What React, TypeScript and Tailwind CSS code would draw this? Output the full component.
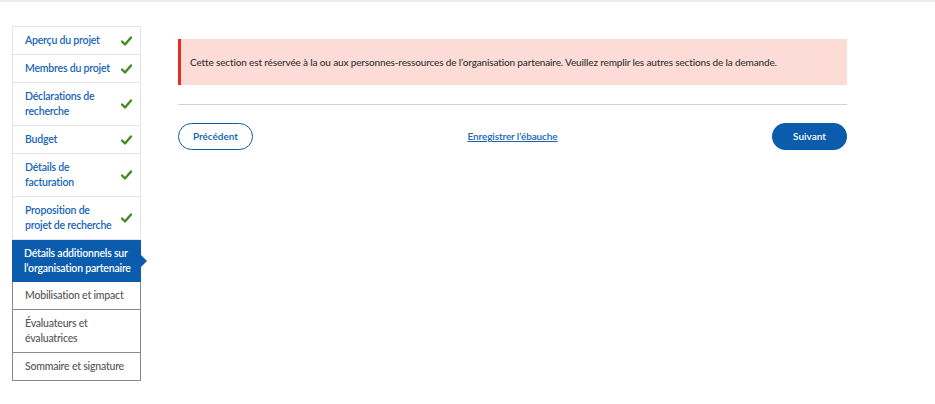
import React from "react";

const Check = () => (
  <svg width="11" height="10" viewBox="0 0 11 10" className="shrink-0">
    <path d="M1 5.5 L4 8.5 L10 1.5" fill="none" stroke="#3f8f1f" strokeWidth="2.4" strokeLinecap="round" strokeLinejoin="round" />
  </svg>
);

const done: React.ReactNode[] = [
  "Aperçu du projet",
  "Membres du projet",
  <>Déclarations de<br />recherche</>,
  "Budget",
  <>Détails de<br />facturation</>,
  <>Proposition de<br />projet de recherche</>,
];

const todo: React.ReactNode[] = [
  "Mobilisation et impact",
  <>Évaluateurs et<br />évaluatrices</>,
  "Sommaire et signature",
];

export default function App() {
  return (
    <div className="min-h-[404px] w-[935px] border-t-2 border-[#ececec] bg-white" style={{ fontFamily: "Lato, 'Open Sans', sans-serif" }}>
      <div className="flex items-start pt-[24px] pl-[12px]">
        <nav className="w-[129px] shrink-0">
          <div className="border border-b-0 border-[#e4e4e4]">
            {done.map((it, i) => (
              <div key={i} className="flex items-center justify-between border-b border-[#e4e4e4] py-[6px] pl-[12px] pr-[8px] text-[10.5px] leading-[15px] font-semibold tracking-[-0.2px] text-[#1664b5]">
                <span>{it}</span>
                <Check />
              </div>
            ))}
          </div>
          <div className="relative bg-[#0b5cad] py-[6px] pl-[12px] pr-[4px] text-[10.5px] leading-[15px] font-semibold tracking-[-0.2px] text-white">
            Détails additionnels sur<br />l’organisation partenaire
            <span className="absolute right-[-6px] top-1/2 -translate-y-1/2 border-y-[6px] border-l-[6px] border-y-transparent border-l-[#0b5cad]" />
          </div>
          <div className="border border-t-0 border-[#8a8a8a]">
            {todo.map((t, i) => (
              <div key={i} className={`py-[6px] pl-[12px] text-[10.5px] leading-[15px] font-medium tracking-[-0.2px] text-[#555] ${i < todo.length - 1 ? "border-b border-[#8a8a8a]" : ""}`}>
                {t}
              </div>
            ))}
          </div>
        </nav>
        <main className="ml-[37px] mt-[13px] w-[669px]">
          <div className="flex h-[46px] items-center border-l-[3px] border-[#e3301c] bg-[#fddcd7] pl-[9px] text-[10px] font-medium tracking-[-0.15px] text-[#333]">
            Cette section est réservée à la ou aux personnes-ressources de l’organisation partenaire. Veuillez remplir les autres sections de la demande.
          </div>
          <div className="mt-[19px] h-px bg-[#d2d2d2]" />
          <div className="mt-[18px] flex items-center justify-between">
            <button className="h-[27px] w-[75px] rounded-full border border-[#0b5cad] text-[10px] font-semibold text-[#0b5cad]">Précédent</button>
            <a href="#" className="text-[10px] font-semibold tracking-[-0.1px] text-[#1664b5] underline">Enregistrer l’ébauche</a>
            <button className="h-[27px] w-[75px] rounded-full bg-[#0b5cad] text-[10px] font-semibold text-white">Suivant</button>
          </div>
        </main>
      </div>
    </div>
  );
}
